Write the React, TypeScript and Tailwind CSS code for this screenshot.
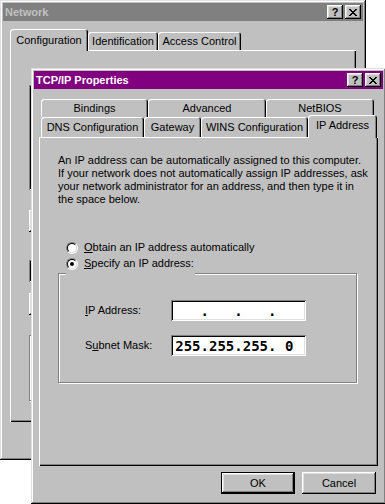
import React from 'react';

const windowEdge =
  'shadow-[inset_-1px_-1px_0_#000,inset_1px_1px_0_#dfdfdf,inset_-2px_-2px_0_#808080,inset_2px_2px_0_#fff]';
const raised =
  'shadow-[inset_-1px_-1px_0_#000,inset_1px_1px_0_#fff,inset_-2px_-2px_0_#808080,inset_2px_2px_0_#dfdfdf]';
const sunken =
  'shadow-[inset_1px_1px_0_#808080,inset_-1px_-1px_0_#fff,inset_2px_2px_0_#000,inset_-2px_-2px_0_#dfdfdf]';
const etched = 'border border-[#808080] shadow-[inset_1px_1px_0_#fff,1px_1px_0_#fff]';
const panelEdge = 'shadow-[inset_1px_1px_0_#fff,inset_-1px_-1px_0_#000,inset_-2px_-2px_0_#808080]';
const tabEdge = 'shadow-[inset_1px_1px_0_#fff,inset_-1px_0_0_#000,inset_-2px_0_0_#808080]';

const CloseGlyph = () => (
  <svg width="8" height="7" viewBox="0 0 8 7" shapeRendering="crispEdges">
    <path
      fill="#000"
      d="M0 0h2v1H0z M6 0h2v1H6z M1 1h2v1H1z M5 1h2v1H5z M2 2h4v1H2z M3 3h2v1H3z M2 4h4v1H2z M1 5h2v1H1z M5 5h2v1H5z M0 6h2v1H0z M6 6h2v1H6z"
    />
  </svg>
);

const TitleButton = ({ children }: { children: React.ReactNode }) => (
  <div
    className={`flex h-[14px] w-[16px] items-center justify-center bg-[#c0c0c0] text-[11px] font-bold leading-none text-black ${raised}`}
  >
    {children}
  </div>
);

const TitleBar = ({ title, active }: { title: string; active?: boolean }) => (
  <div
    className={`flex h-[18px] shrink-0 items-center gap-[2px] px-[2px] ${
      active ? 'bg-[#800080] text-white' : 'bg-[#808080] text-[#c0c0c0]'
    }`}
  >
    <span className="flex-1 text-[11px] font-bold leading-none">{title}</span>
    <TitleButton>?</TitleButton>
    <TitleButton>
      <CloseGlyph />
    </TitleButton>
  </div>
);

const Tab = ({ label, className }: { label: string; className: string }) => (
  <div
    className={`flex items-center justify-center rounded-t-[3px] bg-[#c0c0c0] text-[11px] leading-none text-black ${tabEdge} ${className}`}
  >
    {label}
  </div>
);

const Radio = ({ checked }: { checked?: boolean }) => (
  <span className="flex h-[12px] w-[12px] shrink-0 items-center justify-center rounded-full border border-b-white border-l-[#808080] border-r-white border-t-[#808080]">
    <span className="flex h-[10px] w-[10px] items-center justify-center rounded-full border border-b-[#dfdfdf] border-l-black border-r-[#dfdfdf] border-t-black bg-white">
      {checked && <span className="h-[4px] w-[4px] rounded-full bg-black" />}
    </span>
  </span>
);

const IpField = ({ parts }: { parts: string[] }) => (
  <div
    className={`flex h-[21px] w-[135px] items-center bg-white px-[2px] font-['DejaVu_Sans_Mono',monospace] text-[14px] font-bold leading-none text-black ${sunken}`}
  >
    {parts.map((p, i) => (
      <React.Fragment key={i}>
        {i > 0 && <span className="flex w-[4px] justify-center">.</span>}
        <span className="flex flex-1 justify-center">{p}</span>
      </React.Fragment>
    ))}
  </div>
);

const Button = ({ label, isDefault }: { label: string; isDefault?: boolean }) => (
  <div
    className={`flex h-[22px] w-[74px] items-center justify-center bg-[#c0c0c0] text-[11px] leading-none text-black ${
      isDefault ? 'border border-black' : ''
    } ${raised}`}
  >
    {label}
  </div>
);

const NetworkWindow = () => (
  <div className={`absolute left-0 top-0 flex h-[460px] w-[366px] flex-col bg-[#c0c0c0] p-[3px] ${windowEdge}`}>
    <TitleBar title="Network" />
    <div className="mt-[8px] flex h-[21px] items-end pl-[7px]">
      <Tab label="Configuration" className="relative z-10 -mb-px h-[22px] w-[78px]" />
      <Tab label="Identification" className="h-[18px] w-[70px]" />
      <Tab label="Access Control" className="h-[18px] w-[83px]" />
    </div>
    <div className={`mx-[7px] flex h-[372px] flex-col px-[19px] pt-[35px] ${panelEdge}`}>
      <div className={`h-[105px] bg-white ${sunken}`} />
      <div className={`mt-[20px] h-[22px] w-[75px] ${raised}`} />
      <div className={`mt-[28px] h-[22px] bg-white ${sunken}`} />
      <div className={`mt-[11px] h-[22px] w-[150px] ${raised}`} />
      <div className={`mt-[20px] h-[66px] ${etched}`} />
    </div>
  </div>
);

const TcpIpWindow = () => (
  <div className={`absolute left-[31px] top-[68px] flex h-[436px] w-[355px] flex-col bg-[#c0c0c0] p-[3px] ${windowEdge}`}>
    <TitleBar title="TCP/IP Properties" active />
    <div className="flex flex-col px-[5px] pt-[10px]">
      <div className="flex h-[18px] pl-[2px]">
        <Tab label="Bindings" className="h-[18px] w-[107px]" />
        <Tab label="Advanced" className="h-[18px] w-[118px]" />
        <Tab label="NetBIOS" className="h-[18px] w-[108px]" />
      </div>
      <div className="flex h-[20px] items-end pl-[2px]">
        <Tab label="DNS Configuration" className="h-[20px] w-[103px]" />
        <Tab label="Gateway" className="h-[20px] w-[57px]" />
        <Tab label="WINS Configuration" className="h-[20px] w-[107px]" />
        <Tab label="IP Address" className="relative z-10 -mb-px h-[23px] w-[69px] pb-[3px]" />
      </div>
      <div className={`flex h-[329px] flex-col px-[19px] pt-[17px] text-[11px] leading-[13px] text-black ${panelEdge}`}>
        <p className="whitespace-nowrap">
          An IP address can be automatically assigned to this computer.
          <br />
          If your network does not automatically assign IP addresses, ask
          <br />
          your network administrator for an address, and then type it in
          <br />
          the space below.
        </p>
        <div className="mt-[35px] flex h-[13px] items-center gap-[6px] pl-[8px]">
          <Radio />
          <span>
            <span className="underline">O</span>btain an IP address automatically
          </span>
        </div>
        <div className={`relative mt-[19px] h-[110px] w-[299px] pl-[26px] pt-[26px] ${etched}`}>
          <div className="absolute -top-[18px] left-[7px] flex h-[21px] items-start gap-[6px] bg-[#c0c0c0] pr-[1px] pt-[1px]">
            <span className="flex h-[13px] items-center">
              <Radio checked />
            </span>
            <span>
              <span className="underline">S</span>pecify an IP address:
            </span>
          </div>
          <div className="flex items-center">
            <span className="w-[86px]">
              <span className="underline">I</span>P Address:
            </span>
            <IpField parts={['', '', '', '']} />
          </div>
          <div className="mt-[14px] flex items-center">
            <span className="w-[86px]">
              S<span className="underline">u</span>bnet Mask:
            </span>
            <IpField parts={['255', '255', '255', '0']} />
          </div>
        </div>
      </div>
      <div className="mt-[6px] flex justify-end gap-[7px] pr-[2px]">
        <Button label="OK" isDefault />
        <Button label="Cancel" />
      </div>
    </div>
  </div>
);

export default function App() {
  return (
    <div className="relative h-[504px] w-[385px] overflow-hidden bg-white font-['Liberation_Sans',Arial,sans-serif]">
      <NetworkWindow />
      <TcpIpWindow />
    </div>
  );
}
